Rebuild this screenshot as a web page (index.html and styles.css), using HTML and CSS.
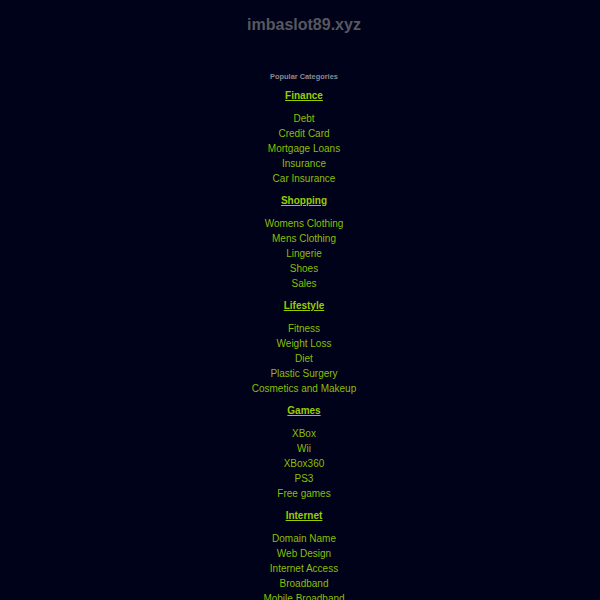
FILE: index.html
```html
<!DOCTYPE html>
<html>
<head>
<meta charset="utf-8">
<link rel="stylesheet" href="styles.css">
</head>
<body>
<div class="page">
  <h1 class="title">imbaslot89.xyz</h1>
  <div class="cats">
    <h2 class="cats-head">Popular Categories</h2>
    <div class="cat">
      <a class="cat-title" href="#">Finance</a>
      <ul class="cat-list">
        <li><a href="#">Debt</a></li>
        <li><a href="#">Credit Card</a></li>
        <li><a href="#">Mortgage Loans</a></li>
        <li><a href="#">Insurance</a></li>
        <li><a href="#">Car Insurance</a></li>
      </ul>
    </div>
    <div class="cat">
      <a class="cat-title" href="#">Shopping</a>
      <ul class="cat-list">
        <li><a href="#">Womens Clothing</a></li>
        <li><a href="#">Mens Clothing</a></li>
        <li><a href="#">Lingerie</a></li>
        <li><a href="#">Shoes</a></li>
        <li><a href="#">Sales</a></li>
      </ul>
    </div>
    <div class="cat">
      <a class="cat-title" href="#">Lifestyle</a>
      <ul class="cat-list">
        <li><a href="#">Fitness</a></li>
        <li><a href="#">Weight Loss</a></li>
        <li><a href="#">Diet</a></li>
        <li><a href="#">Plastic Surgery</a></li>
        <li><a href="#">Cosmetics and Makeup</a></li>
      </ul>
    </div>
    <div class="cat">
      <a class="cat-title" href="#">Games</a>
      <ul class="cat-list">
        <li><a href="#">XBox</a></li>
        <li><a href="#">Wii</a></li>
        <li><a href="#">XBox360</a></li>
        <li><a href="#">PS3</a></li>
        <li><a href="#">Free games</a></li>
      </ul>
    </div>
    <div class="cat">
      <a class="cat-title" href="#">Internet</a>
      <ul class="cat-list">
        <li><a href="#">Domain Name</a></li>
        <li><a href="#">Web Design</a></li>
        <li><a href="#">Internet Access</a></li>
        <li><a href="#">Broadband</a></li>
        <li><a href="#">Mobile Broadband</a></li>
      </ul>
    </div>
  </div>
</div>
</body>
</html>
```
FILE: styles.css
```css
html, body {
  margin: 0;
  padding: 0;
  background: #00021a;
}
body {
  font-family: "Liberation Sans", Arial, sans-serif;
}
.page {
  text-align: center;
  padding-left: 8px;
}
.title {
  margin: 0;
  padding-top: 15px;
  font-size: 16px;
  line-height: 20px;
  font-weight: bold;
  color: #57585f;
}
.cats {
  padding-top: 37px;
}
.cats-head {
  margin: 0 0 6px 0;
  font-size: 7.4px;
  line-height: 10px;
  font-weight: bold;
  color: #8a8b92;
}
.cat {
  display: flex;
  flex-direction: column;
  align-items: center;
  margin-bottom: 7px;
}
.cat-title {
  font-size: 10px;
  line-height: 15px;
  font-weight: bold;
  color: #99cc00;
  text-decoration: underline;
  margin-bottom: 8px;
}
.cat-list {
  list-style: none;
  margin: 0;
  padding: 0;
}
.cat-list li {
  font-size: 10px;
  line-height: 15px;
}
.cat-list a {
  color: #8cbf00;
  text-decoration: none;
}
```
